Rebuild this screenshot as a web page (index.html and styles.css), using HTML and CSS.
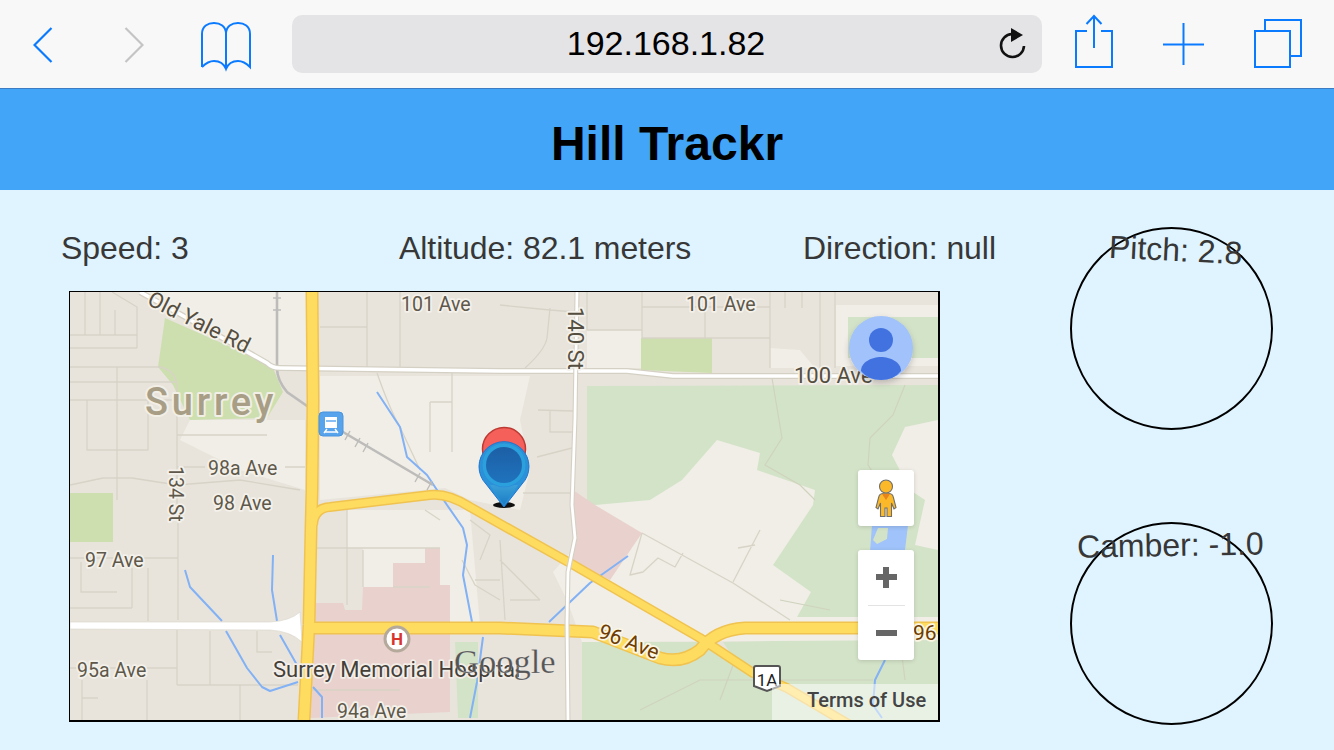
FILE: index.html
```html
<!DOCTYPE html>
<html lang="en">
<head>
<meta charset="utf-8">
<title>Hill Trackr</title>
<link rel="stylesheet" href="styles.css">
</head>
<body>
<nav class="toolbar">
  <svg class="tb tb-back" viewBox="33 0 20 88"><path d="M51.500 28L34.500 45L51.500 62"/></svg>
  <svg class="tb tb-forward" viewBox="124 0 20 88"><path class="off" d="M125.500 28L142.500 45L125.500 62"/></svg>
  <svg class="tb tb-book" viewBox="201 0 50 88"><path d="M202 67V34C202 26 208 23 214 23C220 23 226 26 226 34V68M226 34C226 26 232 23 238 23C244 23 250 26 250 34V67C246 63 242 61 238 61C232 61 228 64 226 69C224 64 220 61 214 61C210 61 206 63 202 67"/></svg>
  <div class="url">
    <span class="url-text">192.168.1.82</span>
    <svg class="reload" viewBox="997 27 30 34"><path d="M1012 34A11.500 11.500 0 1 0 1024 46"/><polygon points="1011,28 1023,35 1011,42"/></svg>
  </div>
  <svg class="tb tb-share" viewBox="1075 0 38 88"><path d="M1087 31H1076V67H1112V31H1101M1094 48V16M1086.500 24L1094 16L1101.500 24"/></svg>
  <svg class="tb tb-plus" viewBox="1163 0 41 88"><path d="M1163 44.500H1204M1183.500 23V65"/></svg>
  <svg class="tb tb-tabs" viewBox="1254 0 48 88"><path d="M1255 31H1290V67H1255ZM1265 30V20H1301V56H1291"/></svg>
</nav>
<header class="title"><h1>Hill Trackr</h1></header>
<main class="content">
  <section class="left">
    <div class="stats">
      <span class="stat">Speed: 3</span>
      <span class="stat">Altitude: 82.1 meters</span>
      <span class="stat">Direction: null</span>
    </div>
    <div class="map">
      <svg class="map-svg" viewBox="70 292 868 428" preserveAspectRatio="none">
        <defs>
          <path id="r-main" d="M312 292L313 400L312 490L311 530L309 625L304 720"/>
          <path id="r-branch" d="M313 525Q314 508 330 507L430 495Q448 493 470 507L570 563L700 638L753 673L787 688L850 725"/>
          <path id="r-96" d="M312 628L500 628L593 632L660 658Q682 664 700 650Q715 630 745 628L940 628"/>
          <path id="r-100" d="M140 292L187 318L267 363Q272 368 280 368L500 371L627 371L673 376L940 376"/>
          <path id="r-140" d="M577 292L575 418L572 505L575 538L568 572L567 622L568 720"/>
          <filter id="soft" x="-30%" y="-30%" width="160%" height="170%"><feDropShadow dx="0" dy="3" stdDeviation="3" flood-color="#000" flood-opacity=".2"/></filter>
          <linearGradient id="pin" x1="0" y1="0" x2="0" y2="1"><stop offset="0" stop-color="#1c5fa6"/><stop offset="1" stop-color="#1f73bd"/></linearGradient>
          <linearGradient id="pintip" x1="0" y1="0" x2="0" y2="1"><stop offset="0" stop-color="#3ba0d8"/><stop offset="1" stop-color="#1b7cc4"/></linearGradient>
        </defs>
        <rect class="base" x="70" y="292" width="868" height="428"/>
        <g class="light">
          <polygon points="140,292 307,292 307,368 270,365"/>
          <polygon points="320,376 530,376 520,420 530,470 520,510 470,500 445,488 320,500"/>
          <polygon points="190,420 305,420 305,490 240,470 180,440"/>
          <polygon points="347,510 470,510 480,625 440,625 440,548 425,548 425,563 393,563 393,587 363,587 363,548 347,548"/>
          <polygon points="587,330 642,330 642,368 587,368"/>
          <polygon points="836,305 938,305 938,366 836,366"/>
          <polygon points="770,348 800,350 815,368 770,368"/>
        </g>
        <g class="forest">
          <polygon points="587,386 938,385 938,620 580,620 587,500"/>
          <polygon points="848,317 938,317 938,358 848,358"/>
          <polygon points="582,642 710,642 770,684 800,720 582,720"/>
          <polygon points="723,642 938,638 938,720 800,720 735,660"/>
          <polygon points="455,642 478,642 478,718 458,718"/>
        </g>
        <g class="light">
          <polygon points="717,440 760,453 757,470 815,490 813,505 773,565 811,592 797,617 938,617 938,640 582,642 567,600 553,572 590,530 595,505 650,500 682,480"/>
          <polygon points="892,455 905,427 938,420 938,550 915,545 925,500 910,490"/>
        </g>
        <g class="park">
          <polygon points="165,318 260,360 273,368 283,392 267,418 190,420 173,385 158,367"/>
          <polygon points="641,338 712,338 712,373 641,370"/>
          <polygon points="70,493 113,493 113,542 70,542"/>
        </g>
        <g class="pink">
          <polygon points="425,548 440,548 440,585 450,585 450,712 310,718 315,603 343,603 345,610 362,610 363,587 393,587 393,563 425,563"/>
          <polygon points="573,490 595,505 642,533 610,580 573,562"/>
        </g>
        <path class="water-fill" d="M872 525H908L905 550L870 552ZM878 528L873 540L877 544L887 539L888 528Z" fill-rule="evenodd"/>
        <path class="streets" d="M85 292V335M100 292V335M70 335H137M70 348H137M112 292L137 307V348M115 310V335M70 367H160Q175 370 177 385V505M117 367V500M70 382H177M70 400H177M87 400V450H148V400M177 435H267M177 467H205M285 467H305M70 485L103 478L132 478L177 485L240 480L300 490M178 505V620M70 558H178M81 562V592H117M132 568V608M70 608H132M148 568V621M177 630V685M210 631V685M70 668H177M177 685H298M240 685V720M147 680V720M82 680V720M82 698H98M257 631V652H272M367 292V372M400 292V372M320 327H367M642 307H770M642 292V338M705 308V338M642 338H770M770 292V368M785 292V308M802 292V308M820 292V368M835 292V368M550 310L575 312M525 368Q545 350 547 338L550 308M500 305L550 310M587 292V330H642M538 410L573 411M550 411V432H573M537 457L572 448M523 493H571M430 402V452M452 373V452M430 402H452M377 373Q390 410 400 427L420 470M347 510V605M363 550V587M425 510L440 520M317 548H440M393 587H430M500 540L505 620M470 520L490 535L480 560M500 560L540 600M510 600H540M642 533L733 583L790 620M760 530L733 582M738 548L755 545M683 553L675 567L658 558L643 572L630 575L642 533M475 580H500M462 560L475 585L500 600"/>
        <path class="trails" d="M772 378L782 438L765 465L800 485L815 500M905 385L893 415L870 438L868 465L885 490M640 710L700 680L873 680M735 660L720 700M300 690L400 690M780 600L830 610M900 640L905 680"/>
        <path class="water" d="M377 392L400 427L407 457L427 475L447 505L463 528L467 545L463 575L472 622M483 637L477 682L470 718M185 570L190 587L222 621M226 631L247 668L262 687L270 691L298 682M313 687L322 697L322 718M273 555L272 590L277 621M280 635L297 665M628 556L590 583L549 622M885 660L875 680L873 705L882 718"/>
        <path class="rail" d="M277 292V368Q277 380 287 392L320 415L343 432L433 485"/>
        <path class="rail-ticks" d="M273 298H281M273 310H281M273 369H281M350 431L345 440M360 438L355 447M368 443L363 452M420 473L415 482M432 481L427 490"/>
        <use class="art-case" href="#r-100"/>
        <use class="art" href="#r-100"/>
        <path class="white-road" d="M70 622L270 622Q290 621 300 612L302 642Q290 631 270 630L70 629Z"/>
        <use class="hw-case" href="#r-main"/>
        <use class="hw-case thin" href="#r-branch"/>
        <use class="hw-case" href="#r-96"/>
        <use class="hw" href="#r-main"/>
        <use class="hw thin" href="#r-branch"/>
        <use class="hw" href="#r-96"/>
        <use class="st-case" href="#r-140"/>
        <use class="st" href="#r-140"/>
        <text class="lbl lg" transform="translate(146 304) rotate(26.500)">Old Yale Rd</text>
        <text class="lbl" x="401" y="311">101 Ave</text>
        <text class="lbl" x="686" y="311">101 Ave</text>
        <text class="lbl lg" transform="translate(568 307) rotate(90)">140 St</text>
        <text class="lbl lg" x="794" y="383">100 Ave</text>
        <text class="lbl" transform="translate(169 466) rotate(90)">134 St</text>
        <text class="lbl" x="208" y="475">98a Ave</text>
        <text class="lbl" x="213" y="510">98 Ave</text>
        <text class="lbl" x="85" y="567">97 Ave</text>
        <text class="lbl" x="77" y="677">95a Ave</text>
        <text class="lbl" x="337" y="718">94a Ave</text>
        <text class="city" x="145" y="415">Surrey</text>
        <text class="poi" x="273" y="677">Surrey Memorial Hospital</text>
        <text class="hwy" transform="translate(597 637) rotate(21)">96 Ave</text>
        <text class="hwy" x="913" y="640">96</text>
        <g class="train">
          <rect x="319" y="412" width="24" height="24" rx="4"/>
          <path class="train-body" d="M325 417H337V428H325Z"/>
          <path class="train-rail" d="M327 429L324 433M335 429L338 433M325 432H337"/>
          <path class="train-win" d="M326 421H336"/>
        </g>
        <g>
          <circle class="h-ring" cx="397" cy="639" r="12"/>
          <text class="h-text" x="397" y="645">H</text>
        </g>
        <g>
          <path class="shield" d="M754 668Q754 666 756 666H778Q780 666 780 668V686L767 691L754 686Z"/>
          <text class="shield-text" x="767" y="686">1A</text>
        </g>
        <text class="google" x="454" y="673">Google</text>
        <rect class="terms-bg" x="772" y="684" width="166" height="36"/>
        <text class="terms" x="807" y="707">Terms of Use</text>
        <ellipse class="pin-shadow" cx="504" cy="505" rx="11" ry="3"/>
        <circle class="pin-red" cx="504" cy="449" r="21.500"/>
        <path class="pin-outer" d="M504 507L486 484A25 25 0 1 1 522 484Z"/>
        <path class="pin-tip" d="M504 505L490 485H518Z"/>
        <circle class="pin-ring" cx="504" cy="465" r="22"/>
        <circle class="pin-core" cx="504" cy="465" r="18"/>
        <g class="avatar">
          <circle class="av-bg" cx="881" cy="348" r="32"/>
          <circle class="av-fg" cx="881" cy="340" r="12"/>
          <path class="av-fg" d="M861 371C861 362 872 357 881 357C890 357 901 362 901 371Q894 380 881 380Q868 380 861 371Z"/>
        </g>
      </svg>
      <button class="ctl ctl-peg" type="button" aria-label="Street View">
        <svg class="peg" viewBox="0 0 22 38"><path d="M11 14C5 14 4 16 3.500 19L1 28.500L3 30L5.500 24V37.500H10V29H12V37.500H16.500V24L19 30L21 28.500L18.500 19C18 16 17 14 11 14Z"/><circle cx="11" cy="7.500" r="6.500"/><polygon class="peg-v" points="7,15 15,15 11,21"/></svg>
      </button>
      <div class="ctl ctl-zoom">
        <span class="z-btn"><span class="plus"></span></span>
        <span class="z-div"></span>
        <span class="z-btn"><span class="minus"></span></span>
      </div>
    </div>
  </section>
  <aside class="gauges">
    <div class="gauge">
      <div class="dial"></div>
      <span class="g-label g-pitch">Pitch: 2.8</span>
    </div>
    <div class="gauge">
      <div class="dial"></div>
      <span class="g-label g-camber">Camber: -1.0</span>
    </div>
  </aside>
</main>
</body>
</html>
```
FILE: styles.css
```css
* { box-sizing: border-box; }
html, body { margin: 0; height: 750px; overflow: hidden; }
body { background: #dff4ff; font-family: "Liberation Sans", Arial, sans-serif; color: #373737; }

.toolbar { display: flex; height: 89px; background: #f8f8f8; border-bottom: 1px solid #3b7cc2; align-items: flex-start; }
.tb { height: 88px; flex: none; fill: none; stroke: #0a7aff; stroke-width: 2; }
.tb .off { stroke: #c4c4c6; }
.tb-back { width: 20px; margin-left: 33px; stroke-width: 2.2; }
.tb-forward { width: 20px; margin-left: 71px; stroke-width: 2.2; }
.tb-book { width: 50px; margin-left: 57px; }
.tb-share { width: 38px; margin-left: 33px; }
.tb-plus { width: 41px; margin-left: 50px; }
.tb-tabs { width: 48px; margin-left: 50px; }
.url { flex: none; width: 750px; height: 58px; margin: 15px 0 0 41px; background: #e4e4e6; border-radius: 10px; display: grid; align-items: center; }
.url-text, .reload { grid-area: 1 / 1; }
.url-text { justify-self: center; font-size: 34px; color: #000; margin: 0 2px 2px 0; }
.reload { justify-self: end; width: 30px; height: 34px; margin-right: 15px; fill: none; stroke: #111; stroke-width: 2.6; }
.reload polygon { fill: #111; stroke: none; }

.title { height: 101px; padding-top: 8px; background: #42a5f7; display: flex; align-items: center; justify-content: center; }
.title h1 { margin: 0; font-size: 48px; font-weight: 700; color: #000; }

.content { display: flex; }
.left { width: 1070px; flex: none; padding: 40px 0 0 61px; }
.stats { display: grid; grid-template-columns: 338px 404px auto; height: 36px; font-size: 32px; line-height: 36px; letter-spacing: -.06px; }
.stat { white-space: nowrap; }
.map { position: relative; width: 871px; height: 431px; margin: 25px 0 0 8px; border: solid #000; border-width: 1px 2px 2px 1px; overflow: hidden; }
.map-svg { display: block; width: 868px; height: 428px; }

.base { fill: #e8e4dc; }
.light polygon { fill: #f0eee6; }
.forest polygon { fill: #d3e3c8; }
.park polygon { fill: #cddfae; }
.pink polygon { fill: #e9d1cd; }
.water-fill { fill: #9fc3fa; }
.streets { fill: none; stroke: #d8d3c7; stroke-width: 1.3; stroke-linejoin: round; }
.trails { fill: none; stroke: #cfd3bd; stroke-width: 1.2; }
.water { fill: none; stroke: #82b1f5; stroke-width: 2; stroke-linejoin: round; }
.rail { fill: none; stroke: #bdbcba; stroke-width: 2.6; }
.rail-ticks { fill: none; stroke: #bdbcba; stroke-width: 1.4; }
.art-case { fill: none; stroke: #d5d0c4; stroke-width: 6; stroke-linejoin: round; }
.art { fill: none; stroke: #fff; stroke-width: 3.6; stroke-linejoin: round; }
.white-road { fill: #fff; stroke: #d9d5ca; stroke-width: .6; }
.hw-case { fill: none; stroke: #f0c350; stroke-width: 13; stroke-linejoin: round; }
.hw { fill: none; stroke: #fedc60; stroke-width: 10; stroke-linejoin: round; }
.hw-case.thin { stroke-width: 10; }
.hw.thin { stroke-width: 7; }
.st-case { fill: none; stroke: #d5d0c4; stroke-width: 5; }
.st { fill: none; stroke: #fff; stroke-width: 2.8; }

.lbl, .city, .poi, .hwy { font-family: Roboto, sans-serif; paint-order: stroke; stroke-linejoin: round; }
.lbl { font-size: 19.500px; fill: #5e584b; stroke: #f4f1ea; stroke-width: 3.5; }
.lbl.lg { font-size: 22px; fill: #544e41; }
.city { font-size: 38px; font-weight: 500; letter-spacing: 3.8px; fill: #a89e86; stroke: #f2efe6; stroke-width: 4; }
.poi { font-size: 22px; fill: #444039; stroke: #f3eee8; stroke-width: 3.5; }
.hwy { font-size: 21px; fill: #6e3c00; stroke: #fbf6e4; stroke-width: 3.5; }

.train rect { fill: #57a3ec; stroke: #4a94de; }
.train-body { fill: #fff; }
.train-rail { fill: none; stroke: #fff; stroke-width: 1.4; }
.train-win { fill: none; stroke: #57a3ec; stroke-width: 1.4; }
.h-ring { fill: #fff; stroke: #b5a99c; stroke-width: 3; }
.h-text { font: 700 17px Roboto, sans-serif; fill: #d9342b; text-anchor: middle; }
.shield { fill: #fff; stroke: #555; stroke-width: 2; }
.shield-text { font: 400 17px Roboto, sans-serif; fill: #222; text-anchor: middle; }
.google { font-family: "Liberation Serif", serif; font-size: 34.500px; fill: #555; stroke: #fff; stroke-opacity: .35; stroke-width: .6; }
.terms-bg { fill: #fff; fill-opacity: .5; }
.terms { font: 500 20px Roboto, sans-serif; fill: #444; }

.pin-shadow { fill: #111; }
.pin-red { fill: #f5605a; stroke: #bd3a33; stroke-width: 1.5; }
.pin-outer { fill: #2a92d8; stroke: #1f74d0; stroke-width: 1; }
.pin-tip { fill: url(#pintip); }
.pin-ring { fill: #2aa0dc; stroke: #2e8fd8; stroke-width: 1; }
.pin-core { fill: url(#pin); }
.avatar { filter: url(#soft); }
.av-bg { fill: #a1c2fa; }
.av-fg { fill: #4372df; }

.ctl { position: absolute; left: 788px; width: 56px; background: #fff; border: 0; padding: 0; border-radius: 3px; box-shadow: 0 1px 4px rgba(0, 0, 0, .15); }
.ctl-peg { top: 178px; height: 56px; display: flex; align-items: center; justify-content: center; }
.peg { width: 22px; height: 38px; fill: #fbb829; stroke: #6e6e6e; stroke-width: 1.1; }
.peg-v { fill: #e8841c; stroke: none; }
.ctl-zoom { top: 258px; height: 110px; display: flex; flex-direction: column; align-items: center; }
.z-btn { flex: 1; display: flex; align-items: center; justify-content: center; width: 100%; }
.z-div { width: 37px; height: 1px; background: #e3e3e3; }
.plus, .minus { display: block; width: 21px; height: 6px; background: #666; }
.plus { position: relative; }
.plus::after { content: ""; position: absolute; left: 7.500px; top: -7.500px; width: 6px; height: 21px; background: #666; }

.gauges { flex: none; padding-top: 37px; display: flex; flex-direction: column; gap: 92px; }
.gauge { display: grid; width: 203px; height: 203px; }
.dial, .g-label { grid-area: 1 / 1; }
.dial { width: 203px; height: 203px; border: 2px solid #000; border-radius: 50%; }
.g-label { font-size: 32px; line-height: 36px; height: 36px; white-space: nowrap; justify-self: center; margin-top: 5px; }
.g-pitch { margin-left: 8px; transform: rotate(2.8deg); }
.g-camber { margin-right: 2px; transform: rotate(-1deg); }
```
